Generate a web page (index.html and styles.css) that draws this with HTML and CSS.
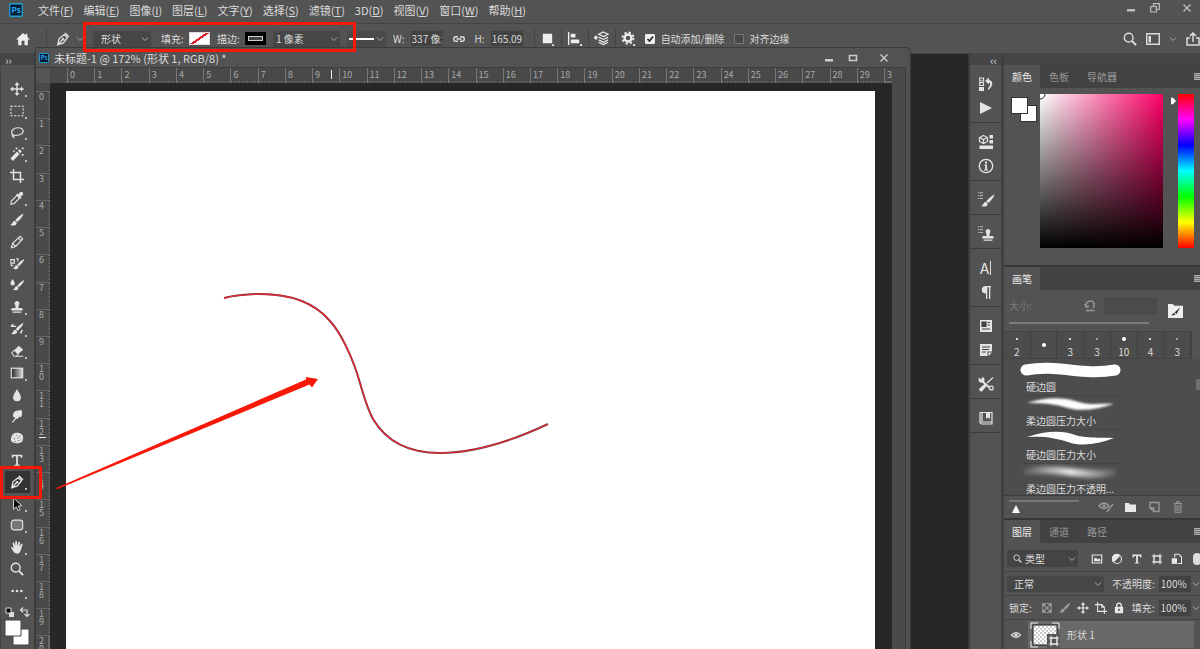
FILE: index.html
```html
<!DOCTYPE html>
<html lang="zh-CN">
<head>
<meta charset="utf-8">
<title>未标题-1</title>
<link rel="stylesheet" href="styles.css">
</head>
<body>
<svg class="symbols" aria-hidden="true">
  <symbol id="brush" viewBox="0 0 16 16"><path d="M15.500 .5 C12 2 8 5.500 6 8.300 L8.200 10.400 C11.500 7.500 14.500 4 15.500 .5Z M5.400 8.800 C3 9 3.600 11.500 .5 13.700 C4 15.200 7.700 14 7.700 11Z" fill="currentColor"/></symbol>
  <symbol id="pen" viewBox="0 0 16 16"><path d="M2 14.500 L3.500 7.500 L9.500 3 L13 6.500 L8.500 12.500Z M2 14.500 L7.500 8.700" fill="none" stroke="currentColor" stroke-width="1.500"/><path d="M9.500 1.800 L11 .6 L15.300 5 L14 6.400Z" fill="currentColor"/><circle cx="8" cy="8.300" r="1.500" fill="currentColor"/></symbol>
  <symbol id="stamp" viewBox="0 0 16 16"><path d="M8 1 a3 3 0 0 1 2 5 L9.500 9 H13 a1.500 1.500 0 0 1 1.500 1.500 V12 H1.500 V10.500 A1.500 1.500 0 0 1 3 9 H6.500 L6 6 A3 3 0 0 1 8 1Z M3 13 H13 V14.500 H3Z" fill="currentColor"/></symbol>
  <symbol id="move" viewBox="0 0 16 16"><path d="M8 0 L10.800 3.500 H8.800 V7.200 H12.500 V5.200 L16 8 L12.500 10.800 V8.800 H8.800 V12.500 H10.800 L8 16 L5.200 12.500 H7.200 V8.800 H3.500 V10.800 L0 8 L3.500 5.200 V7.200 H7.200 V3.500 H5.200Z" fill="currentColor"/></symbol>
  <symbol id="search" viewBox="0 0 16 16"><circle cx="6.500" cy="6.500" r="5" fill="none" stroke="currentColor" stroke-width="1.600"/><path d="M10 10 L15 15" stroke="currentColor" stroke-width="2.200"/></symbol>
  <symbol id="chevron" viewBox="0 0 8 8"><path d="M1 2.500 L4 5.500 L7 2.500" fill="none" stroke="currentColor"/></symbol>
  <symbol id="close" viewBox="0 0 10 10"><path d="M1.500 1.500 L8.500 8.500 M8.500 1.500 L1.500 8.500" stroke="currentColor" stroke-width="1.400"/></symbol>
  <symbol id="minimize" viewBox="0 0 10 10"><path d="M1 6 H9 V8.500 H1Z" fill="currentColor"/></symbol>
  <symbol id="list" viewBox="0 0 6 10"><path d="M0 1 H1.500 M2.500 1 H6 M0 4.500 H1.500 M2.500 4.500 H6 M0 8 H1.500 M2.500 8 H6" stroke="currentColor"/></symbol>
  <symbol id="frame" viewBox="0 0 16 16"><path d="M4 4 H12 V12 H4Z M4 1 V15 M12 1 V15 M1 4 H15 M1 12 H15" fill="none" stroke="currentColor" stroke-width="1.300"/></symbol>
</svg>

<header class="menubar">
  <svg class="logo" viewBox="0 0 14 14"><rect x=".75" y=".75" width="12.500" height="12.500" rx="1" fill="#001d33" stroke="#1fa3d4" stroke-width="1.300"/><text x="7" y="10" text-anchor="middle" font-size="8" font-weight="bold" fill="#31a8ff">Ps</text></svg>
  <nav class="menus">
    <button>文件(<u>F</u>)</button><button>编辑(<u>E</u>)</button><button>图像(<u>I</u>)</button><button>图层(<u>L</u>)</button><button>文字(<u>Y</u>)</button><button>选择(<u>S</u>)</button><button>滤镜(<u>T</u>)</button><button>3D(<u>D</u>)</button><button>视图(<u>V</u>)</button><button>窗口(<u>W</u>)</button><button>帮助(<u>H</u>)</button>
  </nav>
  <div class="window-controls">
    <button aria-label="最小化"><svg><use href="#minimize"/></svg></button>
    <button aria-label="还原"><svg viewBox="0 0 10 10"><path d="M3.500 3 V.7 H9.300 V6.500 H6.500 M.7 3.500 H6.300 V9 H.7Z" fill="none" stroke="currentColor" stroke-width="1.200"/></svg></button>
    <button aria-label="关闭"><svg><use href="#close"/></svg></button>
  </div>
</header>

<section class="options">
  <button class="home" aria-label="主页"><svg viewBox="0 0 16 16"><path d="M8 1 L0 8.500 H2.500 V15 H6.300 V10 H9.700 V15 H13.500 V8.500 H16 L13 5.700 V2 H11 V3.800Z" fill="currentColor"/></svg></button>
  <button class="preset" aria-label="钢笔工具"><svg class="i14"><use href="#pen"/></svg><svg class="i8"><use href="#chevron"/></svg></button>
  <select class="select mode" aria-label="工具模式"><option>形状</option></select>
  <div class="paint first"><span>填充:</span><button class="chip none" aria-label="填充颜色"></button></div>
  <div class="paint"><span>描边:</span><button class="chip outline" aria-label="描边颜色"></button></div>
  <select class="select size" aria-label="描边宽度"><option>1 像素</option></select>
  <button class="line-style" aria-label="描边类型"><i></i><svg class="i8"><use href="#chevron"/></svg></button>
  <label class="measure">W:<input value="337 像素"></label>
  <button class="link" aria-label="链接宽高"><svg viewBox="0 0 14 8"><path d="M6 1.700 H4 A2.300 2.300 0 0 0 4 6.300 H6 M8 1.700 H10 A2.300 2.300 0 0 1 10 6.300 H8 M4.500 4 H9.500" fill="none" stroke="currentColor" stroke-width="1.400"/></svg></button>
  <label class="measure">H:<input value="165.09"></label>
  <div class="path-ops">
    <button aria-label="路径操作"><svg viewBox="0 0 16 16"><path d="M3 3 H13 V13 H3Z M13 14 H15 V16 H13Z" fill="currentColor"/></svg></button>
    <button aria-label="路径对齐"><svg viewBox="0 0 16 16"><path d="M1 1 H2.500 V15 H1Z M4 3 H9 V7 H4Z M4 9 H13 V13 H4Z M14 14 H16 V16 H14Z" fill="currentColor"/></svg></button>
    <button aria-label="路径排列"><svg viewBox="0 0 16 16"><path d="M10 1 L15 3.500 L10 6 L5 3.500Z M5 6.500 L10 9 L15 6.500 M5 9.500 L10 12 L15 9.500 M5 12 L10 14.500 L15 12" fill="none" stroke="currentColor" stroke-width="1.300"/><path d="M0 6 H4 V8 H0Z M1 5 H3 V9 H1Z" fill="currentColor"/></svg></button>
    <button aria-label="设置"><svg viewBox="0 0 16 16"><circle cx="7.500" cy="7.500" r="3.700" fill="none" stroke="currentColor" stroke-width="2.600"/><circle cx="7.500" cy="7.500" r="5.900" fill="none" stroke="currentColor" stroke-width="2" stroke-dasharray="2.400 2.230"/><path d="M13 14 H15 V16 H13Z" fill="currentColor"/></svg></button>
  </div>
  <label class="check"><input type="checkbox" checked>自动添加/删除</label>
  <label class="check"><input type="checkbox">对齐边缘</label>
  <div class="app-actions">
    <button aria-label="搜索"><svg class="i14"><use href="#search"/></svg></button>
    <button aria-label="工作区"><svg class="i14" viewBox="0 0 14 14"><path d="M.7 1.700 H13.300 V12.300 H.7Z" fill="none" stroke="currentColor" stroke-width="1.400"/><path d="M2.500 4 H5 V10.500 H2.500Z" fill="currentColor"/></svg></button>
    <button aria-label="更多工作区"><svg class="i8"><use href="#chevron"/></svg></button>
    <button aria-label="共享"><svg class="i14" viewBox="0 0 14 14"><path d="M4 6 H1 V13 H13 V6 H10 M7 10 V1 M4 4 L7 1 L10 4" fill="none" stroke="currentColor" stroke-width="1.500"/></svg></button>
  </div>
</section>

<main class="workspace">
  <aside class="toolbox">
    <button class="expand">››</button>
    <div class="tools">
      <button class="more" aria-label="移动"><svg><use href="#move"/></svg></button>
      <button class="more" aria-label="选框"><svg viewBox="0 0 16 16"><rect x="1" y="2.500" width="14" height="11" fill="none" stroke="currentColor" stroke-width="1.200" stroke-dasharray="2.500 1.600"/></svg></button>
      <button class="more" aria-label="套索"><svg viewBox="0 0 16 16"><path d="M4 11 C-.5 7 3 2 9 2 C16 2 17 8 11 10 C8 11 5 11 3 10 C1.500 12.500 5 11 4.500 14" fill="none" stroke="currentColor" stroke-width="1.400"/></svg></button>
      <button class="more" aria-label="魔棒"><svg viewBox="0 0 16 16"><path d="M.5 13 L8 5 L11 8 L3.500 16Z M9 4.300 L11 2.500 L13.500 5 L11.700 7Z M6.500 .5 H8.500 V2.500 H6.500Z M13.500 .5 H15.500 V2.500 H13.500Z M13.500 8 H15.500 V10 H13.500Z M3.500 4 H5.500 V5.500 H3.500Z" fill="currentColor"/></svg></button>
      <button aria-label="裁剪"><svg viewBox="0 0 16 16"><path d="M4 0 V12 H16 M0 4 H12 V16" fill="none" stroke="currentColor" stroke-width="1.700"/></svg></button>
      <button class="more" aria-label="吸管"><svg viewBox="0 0 16 16"><path d="M8 5 L11 8 L4.500 14.500 L1 15 L1.500 11.500Z" fill="none" stroke="currentColor" stroke-width="1.300"/><path d="M7 4 L8.200 2.800 L9.500 4 L11.500 1.500 A2.200 2.200 0 0 1 14.600 4.600 L12 6.500 L13.200 7.800 L12 9Z" fill="currentColor"/></svg></button>
      <button aria-label="画笔"><svg><use href="#brush"/></svg></button>
      <button aria-label="铅笔"><svg viewBox="0 0 16 16"><path d="M1.500 14.500 L3 9.500 L11.500 1.500 L14.500 4.500 L6.500 13Z M3 9.500 L6.500 13 M9.500 3.500 L12.500 6.500" fill="none" stroke="currentColor" stroke-width="1.300"/></svg></button>
      <button aria-label="颜色替换"><svg viewBox="0 0 16 16"><use href="#brush" x="3" y="1" width="14" height="15"/><path d="M1 3 H5 V7 H1Z M1.500 8 V10 H4 M7 2 H9 V5" fill="none" stroke="currentColor" stroke-width="1.300"/></svg></button>
      <button aria-label="混合画笔"><svg viewBox="0 0 16 16"><use href="#brush" x="3" y="1" width="14" height="15"/><path d="M3 1 C4.500 3.500 5.500 4.500 5.500 6 A2.500 2.500 0 0 1 .5 6 C.5 4.500 1.800 3 3 1Z" fill="currentColor"/></svg></button>
      <button class="more" aria-label="图章"><svg><use href="#stamp"/></svg></button>
      <button class="more" aria-label="历史画笔"><svg viewBox="0 0 16 16"><use href="#brush" x="1" y="0" width="15" height="16"/><path d="M1 5 H7 M1 5 L4 2.500 M14 9 L12 13" fill="none" stroke="currentColor" stroke-width="1.600"/></svg></button>
      <button class="more" aria-label="橡皮擦"><svg viewBox="0 0 16 16"><path d="M2 10 L5 7 L9.500 11.500 L7 14 H4.500Z M7 14 H15" fill="none" stroke="currentColor" stroke-width="1.200"/><path d="M5 7 L10 2 L15 6.500 L9.500 11.500Z" fill="currentColor"/></svg></button>
      <button class="more" aria-label="渐变"><svg viewBox="0 0 16 16"><defs><linearGradient id="ramp"><stop stop-color="#222"/><stop offset="1" stop-color="#ddd"/></linearGradient></defs><rect x="1.500" y="2.500" width="13" height="11" fill="url(#ramp)" stroke="currentColor" stroke-width="1.300"/></svg></button>
      <button aria-label="模糊"><svg viewBox="0 0 16 16"><path d="M8 1 C10 5 12.500 7.500 12.500 10.500 A4.500 4.500 0 0 1 3.500 10.500 C3.500 7.500 6 5 8 1Z" fill="currentColor"/></svg></button>
      <button aria-label="涂抹"><svg viewBox="0 0 16 16"><path d="M2 15 L6 10 L3.500 8.500 C3 5 5 2 8 2 L12 1 C14.500 1.500 14 5 13.500 7 C13 9.500 11.500 10 10.500 8.500 C10 11 8.500 11.500 7 11 L3.500 15.500Z" fill="currentColor"/></svg></button>
      <button aria-label="海绵"><svg viewBox="0 0 16 16"><path d="M3 4 C6 1 10 2 13 3.500 C16 6 15 9 14 12 C11 15 6 14 3 13 C0 11 1 7 3 4Z" fill="currentColor"/><path d="M4 6 H5 M7 5 H8 M10 6 H12 M4 9 H6 M8 8 H10 M12 9 H13 M5 12 H7 M9 11 H11" stroke="#888" stroke-width="1.100"/></svg></button>
      <button aria-label="文字"><svg viewBox="0 0 16 16"><path d="M2 2 H14 V5.500 H12.500 L12 3.700 H9 V13 L11 13.500 V14.500 H5 V13.500 L7 13 V3.700 H4 L3.500 5.500 H2Z" fill="currentColor"/></svg></button>
      <button class="more active" aria-label="钢笔"><svg><use href="#pen"/></svg></button>
      <button class="more" aria-label="路径选择"><svg viewBox="0 0 16 16"><path d="M4 1 L13.500 10 L9.500 10.300 L11.500 14.500 L9 15.500 L7.300 11.300 L4 14Z" fill="#111" stroke="currentColor"/></svg></button>
      <button class="more" aria-label="圆角矩形"><svg viewBox="0 0 16 16"><rect x="1.500" y="2.500" width="13" height="11" rx="3" fill="#777" stroke="currentColor" stroke-width="1.300"/></svg></button>
      <button class="more" aria-label="抓手"><svg viewBox="0 0 16 16"><path d="M1 8.500 C2 7.500 3 8.500 4.200 10 L3 3.800 C3.400 2.500 4.700 2.800 5 4 L5.900 7.200 L6 2 C6.400 .8 7.700 .9 8 2 L8.300 7 L9.600 2.500 C10 1.500 11.500 1.700 11.400 3 L10.800 7.600 L12.900 4.500 C13.700 3.700 14.800 4.400 14.400 5.500 L12.500 11 C11.500 14 10.500 15.500 8 15.500 C4.500 15.500 3.500 12 1 8.500Z" fill="currentColor"/></svg></button>
      <button aria-label="缩放"><svg><use href="#search"/></svg></button>
      <button class="more" aria-label="更多工具"><svg viewBox="0 0 16 16"><circle cx="3" cy="8" r="1.500" fill="currentColor"/><circle cx="8" cy="8" r="1.500" fill="currentColor"/><circle cx="13" cy="8" r="1.500" fill="currentColor"/></svg></button>
    </div>
    <div class="tool-colors">
      <svg viewBox="0 0 34 47"><path d="M8 10 H13 V15 H8Z" fill="#ddd"/><path d="M5 6 H10 V11 H5Z" fill="#000" stroke="#ddd"/><path d="M20 8 H26 V14 M22 5.500 L19.500 8 L22 10.500 M23.500 12 L26 14.500 L28.500 12" fill="none" stroke="#ddd" stroke-width="1.200"/><path d="M12 27 H28 V43 H12Z" fill="#fff" stroke="#444"/><path d="M4 18 H20 V34 H4Z" fill="#fff" stroke="#444"/></svg>
    </div>
  </aside>

  <div class="backdrop"></div>

  <aside class="strip">
    <button class="expand">‹‹</button>
    <div class="group">
      <button aria-label="历史记录"><svg viewBox="0 0 16 16"><path d="M1.700 2 H5.500 V5 H1.700Z M1.700 6.500 H5.500 V9.500 H1.700Z" fill="none" stroke="currentColor" stroke-width="1.200"/><path d="M1 11 H6 V15 H1Z M7 5 L11 1.500 V4 C16 5 15 11 10 14 V12 C12.500 10 13 7 11 6.500 V8.500Z" fill="currentColor"/></svg></button>
      <button aria-label="动作"><svg viewBox="0 0 16 16"><path d="M2 2 L14 8 L2 14Z" fill="currentColor"/></svg></button>
    </div>
    <div class="group">
      <button aria-label="库"><svg viewBox="0 0 16 16"><path d="M5.500 1.500 L9.500 3.500 V7.500 L5.500 9.500 L1.500 7.500 V3.500Z M1.500 3.500 L5.500 5.500 L9.500 3.500 M5.500 5.500 V9.500" fill="none" stroke="currentColor" stroke-width="1.200"/><path d="M11.500 1 H15 V4.500 H11.500Z M11.500 6 H15 V9.500 H11.500Z M1.500 11.500 H15 V15 H1.500Z" fill="currentColor"/></svg></button>
      <button aria-label="信息"><svg viewBox="0 0 16 16"><circle cx="8" cy="8" r="6.700" fill="none" stroke="currentColor" stroke-width="1.300"/><path d="M7 3.500 H9 V5.500 H7Z M6.500 6.500 H9 V11.500 H10 V12.500 H6 V11.500 H7.200 V7.500 H6.500Z" fill="currentColor"/></svg></button>
    </div>
    <div class="group"><button aria-label="画笔设置"><svg class="wide" viewBox="0 0 18 16"><use href="#list" width="7" height="8"/><use href="#brush" x="4" y="2" width="14" height="14"/></svg></button></div>
    <div class="group"><button aria-label="仿制源"><svg class="wide" viewBox="0 0 18 16"><use href="#list" width="7" height="8"/><use href="#stamp" x="4" y="2" width="14" height="14"/></svg></button></div>
    <div class="group">
      <button aria-label="字符" class="glyph">A<i></i></button>
      <button aria-label="段落"><svg viewBox="0 0 16 16"><path d="M13 2 H7 A3.800 3.800 0 0 0 7 9.500 H8 V15 H9.300 V3.300 H11 V15 H12.300 V3.300 H13Z" fill="currentColor"/></svg></button>
    </div>
    <div class="group">
      <button aria-label="属性"><svg viewBox="0 0 16 16"><path d="M2 2 H14 V14 H2Z" fill="currentColor"/><path d="M4 4 H8 V8.500 H4Z M9.500 4.500 H12 M9.500 7 H12 M4 11 H12" fill="#444" stroke="#444" stroke-width="1.200"/></svg></button>
      <button aria-label="注释"><svg viewBox="0 0 16 16"><path d="M2 2 H14 V9.500 H9.500 V14 H2Z M10.500 10.500 H14 L10.500 14Z" fill="currentColor"/><path d="M4 5 H12 M4 7.500 H11 M4 10 H8" stroke="#444" stroke-width="1.200"/></svg></button>
    </div>
    <div class="group"><button aria-label="工具预设"><svg viewBox="0 0 16 16"><path d="M3 4 L13 13" fill="none" stroke="currentColor" stroke-width="2"/><path d="M9 7 L15 1.500" fill="none" stroke="currentColor" stroke-width="1.300"/><path d="M1 1.500 L3 3.500 L4.500 1 A3 3 0 1 1 .5 4Z" fill="currentColor"/><circle cx="13.300" cy="12" r="1.900" fill="#535353" stroke="currentColor" stroke-width="1.300"/><path d="M1 13 L7 7.500 L9 9.500 L4 15.500 Q1.500 16 1 13Z" fill="currentColor"/></svg></button></div>
    <div class="group"><button aria-label="资源"><svg viewBox="0 0 16 16"><path d="M2 2.500 H14 V14 H3.500 L2 12.500Z M4 2.500 V12 H14" fill="none" stroke="currentColor" stroke-width="1.200"/><path d="M8 3 H12 V9 L10 7.500 L8 9Z" fill="currentColor"/></svg></button></div>
  </aside>

  <aside class="panels">
    <div class="panels-head"></div>
    <section class="panel color">
      <div class="tabs"><button class="on">颜色</button><button>色板</button><button>导航器</button><i class="burger"></i></div>
      <div class="color-body">
        <div class="swatches"><i></i><i></i></div>
        <div class="field"><svg viewBox="0 0 8 8"><path d="M0 5 A5 5 0 0 0 5 0" fill="#fff" stroke="#222"/></svg></div>
        <div class="hue-wrap"><svg viewBox="0 0 6 8"><path d="M0 0 H2.500 L6 4 L2.500 8 H0Z" fill="#fff"/></svg><div class="hue"></div></div>
      </div>
    </section>
    <section class="panel brushes">
      <div class="tabs"><button class="on">画笔</button><i class="burger"></i></div>
      <div class="brush-size">
        <div class="size-controls">
          <label>大小:<input disabled></label>
          <svg class="reset" viewBox="0 0 12 12"><path d="M2 7 C1 3 4 1 6.500 1 C10 1 11.500 5.500 9 8 M1 4 L2 7 L5 6 M2 10.500 H10.500" fill="none" stroke="currentColor" stroke-width="1.500"/></svg>
          <input class="range" type="range" disabled aria-label="画笔大小">
        </div>
        <button aria-label="画笔设置面板"><svg viewBox="0 0 16 16"><path d="M0 1 H5 L7 3 H16 V16 H0Z" fill="#eee"/><path d="M13 4.500 L7 10 L9 12Z M6 10.500 L8 12.500 L3.500 13.500Z" fill="#333"/></svg></button>
      </div>
      <div class="tips">
        <button><i class="d1"></i>2</button><button><i class="d2"></i></button><button><i class="d1"></i>3</button><button><i class="d1 dim"></i>3</button><button><i class="d2"></i>10</button><button><i class="d1"></i>4</button><button><i class="d1 dim"></i>3</button>
      </div>
      <div class="brush-list">
        <button><svg viewBox="0 0 101 17"><path d="M6 8 C38 2 62 14 95 8" fill="none" stroke="#fff" stroke-width="11" stroke-linecap="round"/></svg>硬边圆</button>
        <button><svg class="soft" viewBox="0 0 101 17"><path d="M7 7 C25 1 42 1 55 5 C70 10 80 7 94 8 C78 13 62 16 48 12 C35 8 25 7 7 7Z" fill="#fff"/></svg>柔边圆压力大小</button>
        <button><svg viewBox="0 0 101 17"><path d="M7 7 C25 1 42 0 55 5 C70 9 80 7 94 8 C78 14 62 17 48 12 C35 8 25 6 7 7Z" fill="#fff"/></svg>硬边圆压力大小</button>
        <button><svg class="fade" viewBox="0 0 101 17"><defs><linearGradient id="fade"><stop stop-color="#fff" stop-opacity=".1"/><stop offset=".5" stop-color="#fff" stop-opacity=".9"/><stop offset="1" stop-color="#fff" stop-opacity=".1"/></linearGradient></defs><path d="M4 5 C35 -2 55 9 96 5 V11 C65 19 45 6 4 11Z" fill="url(#fade)"/></svg>柔边圆压力不透明...</button>
      </div>
      <div class="brush-foot">
        <div class="zoom-slider"><i></i></div>
        <button aria-label="预览"><svg viewBox="0 0 16 12"><path d="M1 5 Q6 -1 11 5 Q6 10 1 5Z M15 3 L9 11" fill="none" stroke="currentColor" stroke-width="1.400"/><circle cx="6" cy="4.800" r="1.500" fill="currentColor"/></svg></button>
        <button class="lit" aria-label="新建组"><svg viewBox="0 0 16 12"><path d="M3 2 H7 L8 3.500 H14 V11 H3Z" fill="currentColor"/></svg></button>
        <button aria-label="新建画笔"><svg viewBox="0 0 16 12"><path d="M4 1.500 H13 V10.500 H8 L4 7Z M8 10 V7 H4" fill="none" stroke="currentColor" stroke-width="1.300"/></svg></button>
        <button aria-label="删除画笔"><svg viewBox="0 0 16 12"><path d="M4 2.500 H12 M6.500 2 V.7 H9.500 V2 M5 3 V11.300 H11 V3 M7 4 V10 M9 4 V10" fill="none" stroke="currentColor"/></svg></button>
      </div>
    </section>
    <section class="panel layers">
      <div class="tabs"><button class="on">图层</button><button>通道</button><button>路径</button><i class="burger"></i></div>
      <div class="row filter">
        <label class="kind"><svg><use href="#search"/></svg><select class="select" aria-label="图层类型"><option>类型</option></select></label>
        <div class="icons">
          <button aria-label="像素图层"><svg viewBox="0 0 16 16"><path d="M1.700 2.700 H14.300 V13.300 H1.700Z" fill="none" stroke="currentColor" stroke-width="1.500"/><path d="M4 11 V8 L6.500 6 L9 8.500 L11 7 L12.500 9 V11Z" fill="currentColor"/></svg></button>
          <button aria-label="调整图层"><svg viewBox="0 0 16 16"><circle cx="8" cy="8" r="6" fill="none" stroke="currentColor" stroke-width="1.500"/><path d="M12.500 3.500 A6.400 6.400 0 1 0 3.500 12.500Z" fill="currentColor"/></svg></button>
          <button aria-label="文字图层"><svg viewBox="0 0 16 16"><path d="M2 2 H14 V6 H12.500 L11.500 4 H9.200 V12.500 L11 13 V14 H5 V13 L6.800 12.500 V4 H4.500 L3.500 6 H2Z" fill="currentColor"/></svg></button>
          <button aria-label="形状图层"><svg><use href="#frame"/></svg></button>
          <button aria-label="智能对象"><svg viewBox="0 0 16 16"><path d="M5 6 V1.700 H10.500 L14 5 V14 H9" fill="none" stroke="currentColor" stroke-width="1.400"/><path d="M1 7 H8 V14.500 H1Z" fill="currentColor"/></svg></button>
          <i class="toggle"></i>
        </div>
      </div>
      <div class="row blend">
        <select class="select" aria-label="混合模式"><option>正常</option></select>
        <label>不透明度:<input value="100%"></label><svg class="i8"><use href="#chevron"/></svg>
      </div>
      <div class="row locks">
        <span>锁定:</span>
        <div class="icons">
          <button aria-label="锁定透明像素"><svg viewBox="0 0 16 16"><path d="M2 2 H14 V14 H2Z" fill="none" stroke="currentColor"/><path d="M2 2 H6 V6 H2Z M10 2 H14 V6 H10Z M6 6 H10 V10 H6Z M2 10 H6 V14 H2Z M10 10 H14 V14 H10Z" fill="currentColor"/></svg></button>
          <button aria-label="锁定图像像素"><svg><use href="#brush"/></svg></button>
          <button class="lit" aria-label="锁定位置"><svg><use href="#move"/></svg></button>
          <button class="lit" aria-label="防止嵌套"><svg viewBox="0 0 16 16"><path d="M3.500 0 V12.500 H16 M0 3.500 H9 L12.500 7 V16 M9 3.500 V7 H12.500" fill="none" stroke="currentColor" stroke-width="1.400"/></svg></button>
          <button class="lit" aria-label="全部锁定"><svg viewBox="0 0 16 16"><path d="M5 7 V4.500 A3 3 0 0 1 11 4.500 V7" fill="none" stroke="currentColor" stroke-width="1.800"/><path d="M2.500 6.500 H13.500 V15 H2.500Z" fill="currentColor"/><path d="M8 9 V12" stroke="#444" stroke-width="1.800"/></svg></button>
        </div>
        <label>填充:<input value="100%"></label><svg class="i8"><use href="#chevron"/></svg>
      </div>
      <div class="layer">
        <button class="eye" aria-label="可见性"><svg viewBox="0 0 16 16"><path d="M2 8 Q8 1.500 14 8 Q8 14.500 2 8Z" fill="none" stroke="currentColor" stroke-width="1.800"/><circle cx="8" cy="8" r="2.300" fill="currentColor"/></svg></button>
        <div class="layer-main">
          <div class="thumb"><svg viewBox="0 0 30 26"><defs><pattern id="checks" width="4" height="4" patternUnits="userSpaceOnUse"><path d="M0 0 H4 V4 H0Z" fill="#fff"/><path d="M0 0 H2 V2 H0Z M2 2 H4 V4 H2Z" fill="#ccc"/></pattern></defs><path d="M1 7 V1 H8 M22 1 H29 V7 M1 19 V25 H8 M29 19 V25 H22" fill="none" stroke="#eee"/><path d="M3 3 H27 V23 H3Z" fill="url(#checks)" stroke="#222"/><path d="M17 12 H30 V26 H17Z" fill="#555"/><use href="#frame" x="18" y="13" width="12" height="12" color="#eee"/></svg></div>
          <span>形状 1</span>
        </div>
      </div>
    </section>
  </aside>
</main>

<section class="document">
  <header class="title">
    <svg class="doc-logo" viewBox="0 0 14 14"><rect x=".75" y=".75" width="12.500" height="12.500" rx="1" fill="#001d33" stroke="#1fa3d4" stroke-width="1.300"/><text x="7" y="10" text-anchor="middle" font-size="8" font-weight="bold" fill="#31a8ff">Ps</text></svg>
    <h1>未标题-1 @ 172% (形状 1, RGB/8) *</h1>
    <button aria-label="最小化"><svg><use href="#minimize"/></svg></button>
    <button aria-label="最大化"><svg viewBox="0 0 10 10"><path d="M1.500 2.500 H8.500 V7.500 H1.500Z" fill="none" stroke="currentColor" stroke-width="1.600"/></svg></button>
    <button aria-label="关闭"><svg><use href="#close"/></svg></button>
  </header>
  <div class="doc-body">
    <div class="corner"></div>
    <div class="ruler-x">
      <div class="marks-x"><span>0</span><span>1</span><span>2</span><span>3</span><span>4</span><span>5</span><span>6</span><span>7</span><span>8</span><span class="here">9</span><span>10</span><span>11</span><span>12</span><span>13</span><span>14</span><span>15</span><span>16</span><span>17</span><span>18</span><span>19</span><span>20</span><span>21</span><span>22</span><span>23</span><span>24</span><span>25</span><span>26</span><span>27</span><span>28</span><span>29</span></div>
      <span class="last">30</span>
    </div>
    <div class="ruler-y"><span>0</span><span>1</span><span>2</span><span>3</span><span>4</span><span>5</span><span>6</span><span>7</span><span>8</span><span>9</span><span>10</span><span>11</span><span class="here">12</span><span>13</span><span>14</span><span>15</span><span>16</span><span>17</span><span>18</span><span>19</span><span class="half">20</span></div>
    <div class="stage">
      <div class="canvas">
        <svg viewBox="66 91 809 558" preserveAspectRatio="xMinYMin meet"><path d="M224 298 C236 295 248 294 260 294 C289 294 314 302 330 321 C341 333 353 358 360 383 C365 400 367 408 373 419 C386 441 408 453 440 453 C476 453 514 440 548 424" fill="none" stroke="#70404a" stroke-width="2"/><path d="M224 298 C236 295 248 294 260 294 C289 294 314 302 330 321 C341 333 353 358 360 383 C365 400 367 408 373 419 C386 441 408 453 440 453 C476 453 514 440 548 424" fill="none" stroke="#e02832" stroke-width="1.300"/></svg>
      </div>
    </div>
    <div class="scroll"></div>
  </div>
</section>

<svg class="annotations" width="400" height="520" viewBox="0 0 400 520" aria-hidden="true">
  <g fill="none" stroke="#f81808" stroke-width="3"><path d="M84.500 23.500 H354.500 V50.500 H84.500Z M1.500 467.500 H40.500 V497.500 H1.500Z"/></g>
  <path d="M56 488 L306 379.500 L306 377 L318 379 L312 387.500 L309.500 384.500 L57 489.200Z" fill="#f81808"/>
</svg>
</body>
</html>
```
FILE: styles.css
```css
* { box-sizing: border-box; }
body {
  position: relative;
  display: flex;
  flex-direction: column;
  height: 100vh;
  margin: 0;
  overflow: hidden;
  background: #535353;
  color: #dcdcdc;
  font: 10px/14px "Noto Sans CJK SC", "Noto Sans", sans-serif;
}
button, input, select { font: inherit; color: inherit; border: 0; padding: 0; margin: 0; background: none; border-radius: 0; }
button { display: flex; align-items: center; justify-content: center; }
svg { display: block; flex: none; }
.symbols { position: absolute; width: 0; height: 0; }
.i8 { width: 8px; height: 8px; color: #aaa; }
.i14 { width: 14px; height: 14px; }

.menubar { display: flex; align-items: center; height: 24px; padding-left: 9px; border-bottom: 1px solid #444; font-size: 11px; flex: none; padding-bottom: 3px; }
.logo { width: 14px; height: 14px; }
.menus { display: flex; gap: 10px; margin-left: 15px; flex: 1; }
.menus button { white-space: nowrap; }
.menus u { text-underline-offset: 1px; }
.window-controls { display: flex; padding-bottom: 5px; color: #bbb; }
.window-controls button { width: 24px; }
.window-controls button:last-child { width: 26px; margin-left: 7px; }
.window-controls svg { width: 10px; height: 10px; }

.options { display: flex; align-items: center; height: 30px; flex: none; gap: 7px; border-bottom: 1px solid #454545; white-space: nowrap; }
.home { width: 47px; height: 22px; border-right: 1px solid #444; color: #eee; }
.home svg { width: 14px; height: 14px; }
.preset { gap: 6px; width: 32px; }
.select { appearance: none; height: 16px; padding: 0 8px; background: #464646 url("data:image/svg+xml,%3Csvg xmlns='http://www.w3.org/2000/svg' width='8' height='8'%3E%3Cpath d='M1 2.500L4 5.500L7 2.500' fill='none' stroke='%23aaa'/%3E%3C/svg%3E") no-repeat right 2px center; }
.mode { width: 58px; }
.size { width: 67px; padding: 0 3px; }
.paint { display: flex; align-items: center; }
.paint.first { padding-left: 3px; }
.paint span { width: 28px; }
.chip { width: 21px; height: 13px; border: 1px solid #ddd; }
.none { background: linear-gradient(145deg, #fff 44%, #e01c24 45%, #e01c24 55%, #fff 56%); }
.outline { border: 4px solid #000; border-width: 4px 3px; background: #444; box-shadow: inset 0 0 0 1px #ccc; }
.line-style { width: 39px; height: 16px; justify-content: space-between; padding: 0 2px; background: #4a4a4a; }
.line-style i { width: 25px; height: 2px; background: #fff; }
.measure { display: flex; align-items: center; }
.measure input { width: 32px; height: 15px; margin-left: 6px; padding: 0 1px; background: #424242; }
.link { width: 18px; }
.link svg { width: 14px; height: 8px; }
.path-ops { display: flex; margin-left: 4px; }
.path-ops button { width: 27px; height: 22px; border-left: 1px solid #454545; color: #eee; }
.path-ops button:last-child { margin-right: -4px; }
.path-ops svg { width: 15px; height: 15px; }
.check { display: flex; align-items: center; gap: 6px; margin-right: 2px; }
.check input { appearance: none; width: 10px; height: 10px; border: 1px solid #777; border-radius: 1px; background: #484848; }
.check input:checked { border-color: #eee; background: #eee url("data:image/svg+xml,%3Csvg xmlns='http://www.w3.org/2000/svg' width='8' height='8'%3E%3Cpath d='M1.500 4L3.500 6L7 1.500' fill='none' stroke='%23222' stroke-width='1.600'/%3E%3C/svg%3E") no-repeat center; }
.app-actions { display: flex; align-items: center; gap: 9px; margin-left: auto; }
.app-actions .i14 { width: 14px; }

.workspace { display: flex; flex: 1; min-height: 0; background: #262626; }
.toolbox { display: flex; flex-direction: column; width: 35px; background: #535353; border-left: 1px solid #444; border-right: 1px solid #3c3c3c; }
.expand { height: 11px; background: #454545; width: 100%; padding-right: 18px; font-size: 11px; line-height: 8px; }
.tools { flex: 1; display: flex; flex-direction: column; margin-top: 13px; }
.tools button { flex: 1; min-height: 0; position: relative; padding-right: 2px; color: #e4e4e4; }
.tools svg { width: 14px; height: 14px; }
.more::after { content: ""; position: absolute; right: 7px; bottom: 3px; width: 2px; height: 2px; background: #bbb; }
.tools .active { background: #333; margin: 0 4px 0 4px; }
.tools .active::after { right: 3px; }
.tool-colors { height: 47px; }
.tool-colors svg { width: 34px; height: 47px; }
.backdrop { flex: 1; }

.strip { display: flex; flex-direction: column; width: 36px; background: #535353; border-left: 2px solid #3a3a3a; border-right: 3px solid #404040; color: #e4e4e4; }
.strip .expand { padding: 0 0 0 16px; }
.group { padding: 7px 0 2px; border-bottom: 1px solid #3c3c3c; }
.group button { width: 100%; height: 24px; }
.group svg { width: 16px; height: 16px; }
.group .wide { width: 18px; }
.glyph { font-size: 15px; line-height: 20px; gap: 1px; }
.glyph i { width: 1px; height: 14px; background: #ddd; }

.panels { display: flex; flex-direction: column; width: 196px; overflow: hidden; }
.panels-head { height: 11px; background: #454545; flex: none; }
.panel { background: #535353; border-bottom: 2px solid #383838; flex: none; }
.tabs { display: flex; height: 23px; background: #424242; color: #999; align-items: center; }
.tabs button { height: 23px; padding: 0 9px; }
.tabs .on { background: #535353; color: #eee; width: 36px; padding: 0 7px; }
.burger { width: 6px; height: 7px; margin-left: auto; background: repeating-linear-gradient(#aaa 0 1px, #777 1px 2px); }
.color-body { display: flex; padding: 6px 6px 17px 7px; }
.swatches { width: 29px; padding-top: 3px; }
.swatches i { display: block; width: 17px; height: 17px; background: #fff; border: 1px solid #333; }
.swatches i:first-child { position: relative; z-index: 1; }
.swatches i + i { margin: -9px 0 0 9px; }
.field { flex: 1; height: 154px; background: linear-gradient(to top, #000, transparent), linear-gradient(to right, #fff, #ff0066); }
.field svg { width: 8px; height: 8px; }
.hue-wrap { display: flex; width: 31px; padding-left: 8px; }
.hue-wrap svg { width: 5px; height: 8px; margin: 3px 2px 0 0; }
.hue { width: 16px; background: linear-gradient(#f00, #f0f, #00f, #0ff, #0f0, #ff0, #f00); }

.brush-size { display: flex; justify-content: space-between; align-items: center; height: 41px; padding: 0 17px 0 5px; }
.size-controls { position: relative; width: 148px; color: #7a7a7a; }
.size-controls label { display: flex; justify-content: space-between; align-items: center; }
.size-controls input { height: 16px; width: 53px; background: #4b4b4b; border: 1px solid #494949; }
.reset { position: absolute; left: 75px; top: 2px; width: 12px; height: 12px; color: #999; }
.size-controls .range { appearance: none; display: block; width: 140px; height: 2px; margin: 8px 0 0; border: 0; background: #7b7b7b; }
.range::-webkit-slider-thumb { appearance: none; width: 0; }
.brush-size button svg { width: 15px; height: 15px; }
.tips { display: flex; height: 28px; width: 188px; border: 1px solid #424242; border-left: 0; background: #4c4c4c; }
.tips button { flex: 1; flex-direction: column; border-right: 1px solid #414141; line-height: 13px; height: 26px; }
.tips i { margin: auto; border-radius: 50%; background: #fff; }
.d1 { width: 2px; height: 2px; }
.d2 { width: 4px; height: 4px; }
.dim { opacity: .6; }
.brush-list { height: 137px; overflow: hidden; padding: 3px 0 0 16px; background: linear-gradient(#6e6e6e, #6e6e6e) right 20px / 4px 11px no-repeat #4d4d4d; border-bottom: 1px solid #3d3d3d; }
.brush-list button { flex-direction: column; justify-content: flex-start; align-items: flex-start; width: 101px; height: 34px; border-bottom: 1px solid #444; padding-left: 6px; line-height: 15px; white-space: nowrap; }
.brush-list svg { width: 101px; height: 17px; margin-left: -6px; }
.soft { filter: blur(1px); }
.fade { filter: blur(2px); }
.brush-foot { display: flex; align-items: center; height: 22px; padding-left: 5px; color: #999; }
.zoom-slider { width: 70px; height: 14px; border-top: 2px solid #777; margin-right: 15px; }
.zoom-slider i { display: block; width: 0; border: 4px solid transparent; border-top: 0; border-bottom: 8px solid #fff; margin: 3px 0 0 3px; }
.brush-foot button { width: 24px; }
.brush-foot svg { width: 16px; height: 12px; }
.lit { color: #e8e8e8; }

.layers { flex: 1; border: 0; }
.row { display: flex; align-items: center; height: 24px; border-top: 1px solid #424242; white-space: nowrap; padding-left: 3px; }
.row .i8 { margin-left: auto; }
.filter { height: 28px; border: 0; padding-top: 3px; }
.kind { display: flex; align-items: center; flex: none; width: 71px; height: 17px; padding-left: 6px; background: #444; }
.kind svg { width: 9px; height: 9px; }
.kind select { flex: 1; padding: 0 3px; background-color: #444; }
.icons { display: flex; align-items: center; flex: none; }
.filter .icons { margin-left: 9px; color: #e8e8e8; }
.filter .icons button { width: 20px; }
.icons svg { width: 12px; height: 12px; }
.toggle { width: 8px; height: 12px; margin-left: 6px; border-radius: 5px; background: #ddd; }
.blend .select { width: 97px; padding: 0 7px; margin-right: 8px; }
.row label { display: flex; align-items: center; }
.row label input { width: 32px; height: 16px; margin-left: 4px; padding: 0 2px; background: #424242; }
.locks { padding-left: 5px; }
.locks .icons { margin: 0 4px 0 6px; color: #999; }
.locks .icons button { width: 18px; }
.locks .icons svg { width: 12px; height: 12px; }
.locks .icons button.lit { color: #e8e8e8; }
.layer { display: flex; align-items: center; border-top: 1px solid #454545; padding: 1px 6px 0 0; }
.eye { width: 24px; }
.eye svg { width: 12px; height: 12px; }
.layer-main { display: flex; align-items: center; gap: 7px; flex: 1; padding-left: 2px; height: 27px; background: #696969; }
.thumb svg { width: 30px; height: 26px; }

.document { position: absolute; left: 35px; right: 290px; top: 47px; bottom: 0; display: flex; flex-direction: column; background: #4f4f4f; border: 1px solid #3c3c3c; border-bottom: 0; border-right: 4px solid #505050; border-radius: 0 5px 0 0; box-shadow: 1px 0 0 #3a3a3a; }
.title { display: flex; align-items: center; height: 19px; padding-left: 3px; background: #535353; }
.doc-logo { width: 10px; height: 12px; }
.title h1 { flex: 1; margin: 0 0 0 5px; font-size: 11px; font-weight: 400; line-height: 18px; }
.title button { width: 24px; color: #ccc; }
.title button:last-child { width: 38px; margin-right: 3px; }
.title svg { width: 10px; height: 10px; }
.doc-body { flex: 1; display: grid; grid-template: 15px 1fr / 14px 1fr 14px; min-height: 0; border-top: 1px solid #3d3d3d; color: #aaa; font-size: 9px; }
.corner { background: #555; }
.ruler-x { display: flex; padding-left: 17px; overflow: hidden; background: #494949; line-height: 14px; }
.marks-x { flex: 1; display: flex; }
.ruler-x span { padding-left: 2px; border-left: 1px solid #777; background: linear-gradient(to right, #6a6a6a 1px, transparent 1px) left bottom / 10% 2px repeat-x; }
.marks-x span { flex: 1; min-width: 0; position: relative; }
.ruler-x .last { width: 8px; overflow: hidden; }
.marks-x .here::before { content: ""; position: absolute; right: 7px; top: 2px; width: 1px; height: 9px; background: #eee; }
.ruler-y { display: grid; grid-template-rows: repeat(41, 1fr); min-height: 0; padding-top: 8px; background: #494949; overflow: hidden; }
.ruler-y span { grid-row: span 2; min-height: 0; position: relative; width: 14px; padding: 1px 6px 0 3px; border-top: 1px solid #666; line-height: 8px; word-break: break-all; background: linear-gradient(#6a6a6a 1px, transparent 1px) right top / 2px 10% repeat-y; }
.ruler-y .half { grid-row: span 1; overflow: hidden; }
.ruler-y .here::before { content: ""; position: absolute; left: 3px; bottom: 7px; width: 7px; height: 1px; background: #eee; }
.stage { padding: 8px 17px 0 16px; background: #272727; display: flex; min-height: 0; }
.canvas { flex: 1; background: #fff; }
.canvas svg { width: 100%; }
.scroll { grid-row: 1 / 3; grid-column: 3; background: #4a4a4a; border-right: 1px solid #3b3b3b; }
.annotations { position: absolute; left: 0; top: 0; pointer-events: none; }
```
